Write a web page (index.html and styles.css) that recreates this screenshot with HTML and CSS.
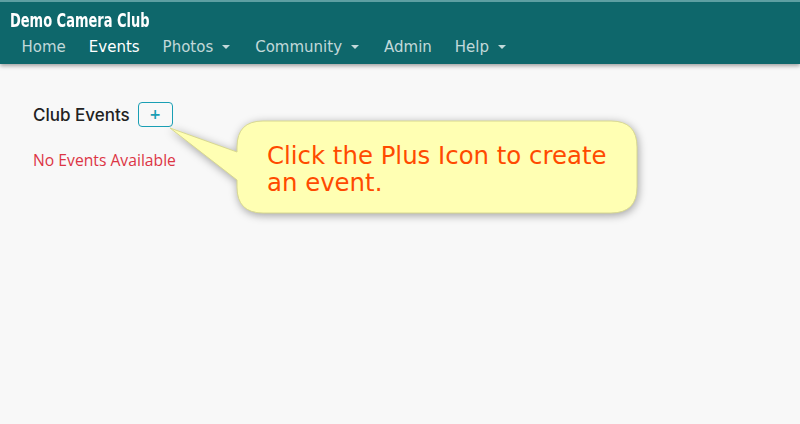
FILE: index.html
```html
<!DOCTYPE html>
<html lang="en">

<head>
    <meta charset="UTF-8" />
    <title>Club Events</title>
    <link rel="stylesheet" href="styles.css">
</head>

<body>

    <nav class="navbar">
        <div class="brand"><span>Demo Camera Club</span></div>
        <ul class="nav">
            <li><a href="#">Home</a></li>
            <li><a href="#" class="active">Events</a></li>
            <li><a href="#" class="dropdown">Photos</a></li>
            <li><a href="#" class="dropdown">Community</a></li>
            <li><a href="#">Admin</a></li>
            <li><a href="#" class="dropdown">Help</a></li>
        </ul>
    </nav>

    <main class="content">
        <div class="title-row">
            <h2>Club Events</h2>
            <button class="btn-add">+</button>
        </div>
        <p class="empty">No Events Available</p>
    </main>

    <!-- hint bubble pointing at the plus button -->
    <div class="callout">
        <svg class="callout-shape" width="800" height="424" viewBox="0 0 800 424">
            <path d="M263 121 H611 Q637 121 637 147 V187 Q637 213 611 213 H263 Q237 213 237 187 V180 L170 128 L237 152 V147 Q237 121 263 121 Z" />
        </svg>
        <div class="callout-text">Click the Plus Icon to create an event.</div>
    </div>

</body>

</html>
```

FILE: styles.css
```css
body {
    margin: 0;
    background: #f8f8f8;
    font-family: "DejaVu Sans", Verdana, sans-serif;
}

/* 顶部导航 */
.navbar {
    background: #0e676b;
    border-top: 2px solid #5d9fa2;
    height: 62px;
    box-sizing: content-box;
    box-shadow: 0 2px 4px rgba(0, 0, 0, 0.35);
}

.brand {
    padding: 6px 0 0 10px;
    height: 27px;
}

.brand span {
    display: inline-block;
    font-family: "DejaVu Sans", sans-serif;
    font-weight: bold;
    font-size: 20px;
    color: #fff;
    transform: scaleX(0.65);
    transform-origin: left center;
    white-space: nowrap;
}

.nav {
    list-style: none;
    margin: 0;
    padding: 0 0 0 10px;
    display: flex;
}

.nav a {
    display: block;
    padding: 3px 11.5px;
    font-size: 15px;
    color: rgba(255, 255, 255, 0.75);
    text-decoration: none;
}

.nav a.active {
    color: #fff;
}

.nav a.dropdown::after {
    content: "";
    display: inline-block;
    margin-left: 9px;
    margin-right: 2px;
    vertical-align: 3px;
    border-top: 4.5px solid;
    border-left: 4.5px solid transparent;
    border-right: 4.5px solid transparent;
}

/* 内容 */
.content {
    padding: 38px 33px;
}

.title-row {
    display: flex;
    align-items: center;
    gap: 8px;
}

.title-row h2 {
    margin: 0;
    font-family: Inter, "Noto Sans", sans-serif;
    font-weight: 500;
    font-size: 17px;
    color: #222;
}

.btn-add {
    width: 35px;
    height: 25px;
    border: 1px solid #1a9fb4;
    border-radius: 4px;
    background: transparent;
    color: #1a9fb4;
    font-family: "DejaVu Sans", sans-serif;
    font-weight: bold;
    font-size: 14px;
    line-height: 1;
    padding: 0 0 2px;
}

.empty {
    margin: 22px 0 0;
    font-family: "Open Sans", "Noto Sans", sans-serif;
    font-size: 15.7px;
    color: #dc3545;
}

/* 提示气泡 */
.callout-shape {
    position: absolute;
    left: 0;
    top: 0;
    pointer-events: none;
}

.callout-shape path {
    fill: #ffffb3;
    stroke: #d8d890;
    stroke-width: 1;
    filter: drop-shadow(1px 2px 4px rgba(0, 0, 0, 0.35));
}

.callout-text {
    position: absolute;
    left: 267px;
    top: 142px;
    width: 350px;
    font-family: "DejaVu Sans", "Lucida Grande", sans-serif;
    font-size: 24.4px;
    line-height: 27px;
    color: #ff4a00;
}
```
